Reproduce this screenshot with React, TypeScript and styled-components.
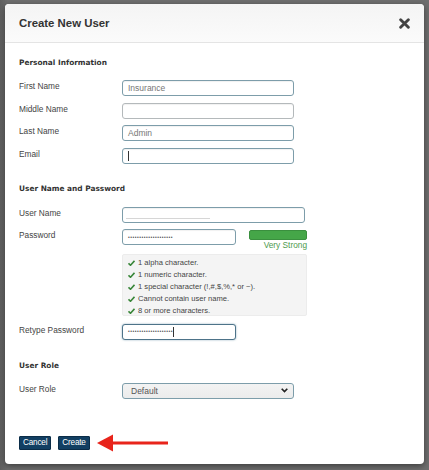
import { FC } from 'react';
import styled, { createGlobalStyle } from 'styled-components';

const GlobalStyle = createGlobalStyle`
  html, body {
    margin: 0;
    padding: 0;
    background: #6c6c6c;
  }
  body {
    font-family: 'Liberation Sans', Arial, sans-serif;
  }
`;

const Page = styled.div`
  width: 429px;
  height: 470px;
  padding: 4px 5px 0;
  box-sizing: border-box;
  background: linear-gradient(90deg, #5f5f5f 0, #6e6e6e 8px, #6e6e6e 100%);
`;

const Modal = styled.div`
  width: 419px;
  height: 460px;
  background: #fff;
  border-radius: 4px;
  box-shadow: 0 2px 6px rgba(0, 0, 0, 0.45);
  display: flex;
  flex-direction: column;
  overflow: hidden;
`;

const Header = styled.div`
  height: 38px;
  flex: none;
  display: flex;
  align-items: center;
  justify-content: space-between;
  padding: 0 14px;
  background: linear-gradient(#f4f4f4, #fbfbfb);
  border-bottom: 1px solid #e4e4e4;
`;

const Title = styled.h1`
  margin: 0;
  font-size: 11.4px;
  font-weight: bold;
  color: #333;
`;

const CloseBtn = styled.button`
  border: none;
  background: transparent;
  padding: 0;
  width: 12px;
  height: 12px;
  display: flex;
  align-items: center;
  justify-content: center;
`;

const Body = styled.div`
  flex: 1;
  display: flex;
  flex-direction: column;
  padding: 14px 14px 0;
`;

const SectionTitle = styled.h2<{ $top?: number }>`
  margin: ${(p) => p.$top ?? 0}px 0 0;
  font-family: 'DejaVu Sans', Verdana, sans-serif;
  font-size: 7.4px;
  line-height: 12px;
  font-weight: bold;
  color: #333;
`;

const Rows = styled.div<{ $top: number }>`
  display: flex;
  flex-direction: column;
  gap: 6.5px;
  margin-top: ${(p) => p.$top}px;
`;

const Row = styled.div`
  display: grid;
  grid-template-columns: 103px auto;
  align-items: start;
`;

const Label = styled.label`
  font-size: 8.3px;
  line-height: 12px;
  color: #444;
`;

const Field = styled.div<{ $w: number; $tone?: 'light' | 'focus' }>`
  position: relative;
  width: ${(p) => p.$w}px;
  height: 16px;
  box-sizing: border-box;
  border: 1px solid
    ${(p) => (p.$tone === 'light' ? '#b4b9bb' : p.$tone === 'focus' ? '#4d7389' : '#7d9daa')};
  border-radius: 3px;
  background: #fff;
  box-shadow: ${(p) =>
    p.$tone === 'focus' ? '0 0 2px rgba(60, 110, 140, 0.6)' : 'inset 0 1px 1px rgba(0, 0, 0, 0.06)'};
  display: flex;
  align-items: center;
  padding: 0 5px;
  font-size: 8.5px;
  color: #777;
`;

const Caret = styled.span`
  display: inline-block;
  width: 1px;
  height: 10px;
  background: #333;
`;

const Redacted = styled.span`
  position: absolute;
  left: 3px;
  bottom: 3px;
  width: 84px;
  height: 1px;
  background: #d6d6d6;
`;

const Dots = styled.span`
  font-size: 5px;
  letter-spacing: 0.5px;
  color: #555;
  line-height: 1;
`;

const PasswordWrap = styled.div`
  display: flex;
  gap: 13px;
  align-items: flex-start;
`;

const Strength = styled.div`
  width: 58px;
  display: flex;
  flex-direction: column;
  align-items: flex-end;
  padding-top: 1px;
`;

const StrengthBar = styled.div`
  width: 58px;
  height: 10px;
  box-sizing: border-box;
  border-radius: 2px;
  background: #45a648;
  border: 1px solid #3a8f3e;
`;

const StrengthText = styled.span`
  font-size: 8.3px;
  line-height: 10px;
  color: #4c9a4c;
`;

const Rules = styled.ul`
  list-style: none;
  margin: -3px 0 1.5px;
  width: 185px;
  box-sizing: border-box;
  padding: 2px 5px 0;
  height: 62px;
  background: #f4f4f4;
  border: 1px solid #ececec;
  border-radius: 2px;
`;

const Rule = styled.li`
  display: flex;
  align-items: center;
  gap: 3px;
  font-size: 7.6px;
  line-height: 12px;
  color: #444;
`;

const Select = styled.div`
  width: 172px;
  height: 16px;
  box-sizing: border-box;
  border: 1px solid #7d9daa;
  border-radius: 3px;
  background: linear-gradient(#f3f3f3, #ececec);
  display: flex;
  align-items: center;
  justify-content: space-between;
  padding: 0 5px 0 8px;
  font-size: 8.5px;
  color: #555;
`;

const Actions = styled.div`
  display: flex;
  align-items: center;
  gap: 7px;
  margin-top: 35px;
`;

const Button = styled.button`
  height: 14px;
  padding: 0 3px;
  border: 1px solid #0b2d48;
  border-radius: 1px;
  background: #123f62;
  color: #fff;
  font-family: 'Liberation Sans', Arial, sans-serif;
  font-size: 8.2px;
  letter-spacing: -0.2px;
  line-height: 12px;
`;

const Check: FC = () => (
  <svg width="7" height="6" viewBox="0 0 14 12">
    <path d="M1 6.5 L5 10.5 L13 1.5" fill="none" stroke="#3a873a" strokeWidth="3.2" />
  </svg>
);

const Chevron: FC = () => (
  <svg width="7" height="5" viewBox="0 0 10 7">
    <path d="M1 1 L5 5 L9 1" fill="none" stroke="#222" strokeWidth="2.4" />
  </svg>
);

const rules = [
  '1 alpha character.',
  '1 numeric character.',
  '1 special character (!,#,$,%,* or ~).',
  'Cannot contain user name.',
  '8 or more characters.',
];

const dots = '•'.repeat(20);

const App: FC = () => (
  <>
    <GlobalStyle />
    <Page>
      <Modal>
        <Header>
          <Title>Create New User</Title>
          <CloseBtn title="close">
            <svg width="11" height="11" viewBox="0 0 10 10">
              <path d="M1.5 1.5 L8.5 8.5 M8.5 1.5 L1.5 8.5" stroke="#444" strokeWidth="2.6" strokeLinecap="round" />
            </svg>
          </CloseBtn>
        </Header>
        <Body>
          <SectionTitle>Personal Information</SectionTitle>
          <Rows $top={11}>
            <Row>
              <Label>First Name</Label>
              <Field $w={172}>Insurance</Field>
            </Row>
            <Row>
              <Label>Middle Name</Label>
              <Field $w={172} $tone="light" />
            </Row>
            <Row>
              <Label>Last Name</Label>
              <Field $w={172}>Admin</Field>
            </Row>
            <Row>
              <Label>Email</Label>
              <Field $w={172}>
                <Caret />
              </Field>
            </Row>
          </Rows>

          <SectionTitle $top={19}>User Name and Password</SectionTitle>
          <Rows $top={12}>
            <Row>
              <Label>User Name</Label>
              <Field $w={183}>
                <Redacted />
              </Field>
            </Row>
            <Row>
              <Label>Password</Label>
              <PasswordWrap>
                <Field $w={114}>
                  <Dots>{dots}</Dots>
                </Field>
                <Strength>
                  <StrengthBar />
                  <StrengthText>Very Strong</StrengthText>
                </Strength>
              </PasswordWrap>
            </Row>
            <Row>
              <span />
              <Rules>
                {rules.map((r) => (
                  <Rule key={r}>
                    <Check />
                    {r}
                  </Rule>
                ))}
              </Rules>
            </Row>
            <Row>
              <Label>Retype Password</Label>
              <Field $w={114} $tone="focus">
                <Dots>{dots}</Dots>
                <Caret />
              </Field>
            </Row>
          </Rows>

          <SectionTitle $top={20}>User Role</SectionTitle>
          <Rows $top={11}>
            <Row>
              <Label>User Role</Label>
              <Select>
                Default
                <Chevron />
              </Select>
            </Row>
          </Rows>

          <Actions>
            <Button>Cancel</Button>
            <Button>Create</Button>
            <svg width="72" height="18" viewBox="0 0 72 18">
              <path d="M0 9 L16 0.5 L16 17.5 Z" fill="#e8241b" />
              <rect x="15" y="7.5" width="56" height="3" fill="#e8241b" />
            </svg>
          </Actions>
        </Body>
      </Modal>
    </Page>
  </>
);

export default App;
